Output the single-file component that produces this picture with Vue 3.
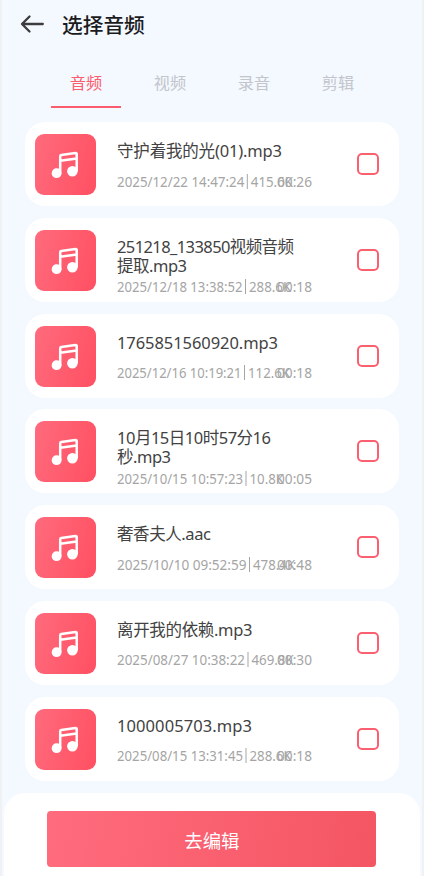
<script setup>
import { ref } from 'vue'

const tabs = ['音频', '视频', '录音', '剪辑']
const active = ref(0)
const items = ref([
  { lines: [['守护着我的光(01).mp3', 165]], date: '2025/12/22 14:47:24', size: '415.6K', dw: 127.3, time: '00:26' },
  { lines: [['251218_133850视频音频', 177], ['提取.mp3', 70]], date: '2025/12/18 13:38:52', size: '288.6K', dw: 125.5, time: '00:18' },
  { lines: [['1765851560920.mp3', 161]], date: '2025/12/16 10:19:21', size: '112.6K', dw: 124.5, time: '00:18' },
  { lines: [['10月15日10时57分16', 154], ['秒.mp3', 54]], date: '2025/10/15 10:57:23', size: '10.8K', dw: 126, time: '00:05' },
  { lines: [['奢香夫人.aac', 94]], date: '2025/10/10 09:52:59', size: '478.4K', dw: 129.5, time: '00:48' },
  { lines: [['离开我的依赖.mp3', 135.5]], date: '2025/08/27 10:38:22', size: '469.8K', dw: 128, time: '00:30' },
  { lines: [['1000005703.mp3', 135]], date: '2025/08/15 13:31:45', size: '288.6K', dw: 126, time: '00:18' }
])
</script>

<template>
  <main class="page">
    <header class="top">
      <svg class="back" width="26" height="20" viewBox="0 0 26 20">
        <path d="M10.5 2.5 3 10l7.5 7.5M3.2 10h20.6" />
      </svg>
      <h1>选择音频</h1>
    </header>

    <nav class="tabs">
      <button v-for="(tab, i) in tabs" :key="tab" :class="{ on: i === active }" @click="active = i">{{ tab }}</button>
    </nav>

    <section class="list">
      <article v-for="item in items" :key="item.date" class="card">
        <div class="cover">
          <svg width="61" height="61" viewBox="0 0 61 61">
            <path class="stem" d="M25.2 39.5V22.4Q25.2 21.3 26.3 21.1L40.4 19Q41.7 18.8 41.7 20V37M25.2 26.8 41.7 24.4" />
            <circle cx="21.6" cy="39.2" r="4.9" />
            <circle cx="37.4" cy="37.2" r="5.3" />
          </svg>
        </div>
        <div class="info" :class="{ two: item.lines.length > 1 }">
          <svg v-for="line in item.lines" :key="line[0]" class="name" width="190" height="19">
            <text x="0" y="15" :textLength="line[1]">{{ line[0] }}</text>
          </svg>
          <div class="meta">
            <svg width="184" height="18">
              <text x="0" y="14" :textLength="item.dw" lengthAdjust="spacingAndGlyphs">{{ item.date }}</text>
              <path class="bar" :d="`M${item.dw + 3} 1v15`" />
              <text :x="item.dw + 6.5" y="14" :textLength="item.size.length * 7.7 - 4" lengthAdjust="spacingAndGlyphs">{{ item.size }}</text>
            </svg>
            <svg class="time" width="36" height="18">
              <text x="0" y="14" textLength="35" lengthAdjust="spacingAndGlyphs">{{ item.time }}</text>
            </svg>
          </div>
        </div>
        <span class="check"></span>
      </article>
    </section>

    <footer class="bottom">
      <button class="edit">去编辑</button>
    </footer>
  </main>
</template>

<style>
body { background: #f4f8ff; overflow: hidden; }
</style>

<style scoped>
* { box-sizing: border-box; }
.page {
  height: 876px;
  display: flex;
  flex-direction: column;
  overflow: hidden;
  background: #f4f8ff;
  border-left: 2px solid #f0f1f3;
  border-right: 2px solid #f0f1f3;
  font-family: "Noto Sans", "Noto Sans CJK SC", sans-serif;
}
.top { height: 50px; flex: none; display: flex; align-items: center; padding: 0 0 2px 17px; }
.back { fill: none; stroke: #3c3c3e; stroke-width: 2.3; stroke-linecap: round; stroke-linejoin: round; }
h1 { margin: 0 0 0 17px; font: 500 20.7px/30px "Noto Sans CJK SC", sans-serif; color: #1b1b1d; }
.tabs { height: 72px; flex: none; display: flex; gap: 14px; padding: 16px 0 0 49px; }
.tabs button {
  width: 70px;
  height: 42px;
  padding: 0 0 9px;
  border: 0;
  border-bottom: 2.4px solid transparent;
  background: none;
  font: 400 16.2px/24px "Noto Sans CJK SC", sans-serif;
  color: #c2c5cb;
}
.tabs .on { color: #fb5d6e; border-color: #fb5d6e; }
.list { display: flex; flex-direction: column; gap: 11.8px; padding: 0 23px 0 23px; flex: none; }
.card {
  height: 84px;
  display: flex;
  align-items: flex-start;
  background: #fff;
  border-radius: 20px;
  padding: 12px 20.5px 0 9.5px;
}
.cover { width: 61px; height: 61px; flex: none; border-radius: 9px; background: linear-gradient(105deg, #ff6b7d, #ff5062); }
.cover svg { display: block; fill: #fff; }
.cover .stem { fill: none; stroke: #fff; stroke-width: 2.5; stroke-linejoin: round; }
.info { width: 200px; margin-left: 21px; padding-top: 8px; display: flex; flex-direction: column; }
.info svg { display: block; overflow: visible; }
.name { font-size: 16.5px; fill: #424242; }
.meta { display: flex; margin-top: 11.5px; font-size: 13.6px; fill: #a5a5a5; }
.two .meta { margin-top: 2.3px; }
.meta .time { margin-left: -23.5px; }
.bar { fill: none; stroke: #a5a5a5; stroke-width: 1; }
.check { width: 22px; height: 22px; margin: 19px 0 0 auto; border: 2px solid #fb6071; border-radius: 5px; }
.bottom {
  height: 83px;
  margin: 12.2px 2px 0;
  padding-top: 18px;
  flex: none;
  display: flex;
  align-items: flex-start;
  background: #fff;
  border-radius: 21px 21px 0 0;
}
.edit {
  width: 329px;
  height: 56px;
  margin-left: 43.4px;
  padding: 3px 0 0 0;
  border: 0;
  border-radius: 4px;
  background: linear-gradient(100deg, #ff6c7e, #f45562);
  color: #fff;
  font: 400 18.4px/26px "Noto Sans CJK SC", sans-serif;
}
</style>
